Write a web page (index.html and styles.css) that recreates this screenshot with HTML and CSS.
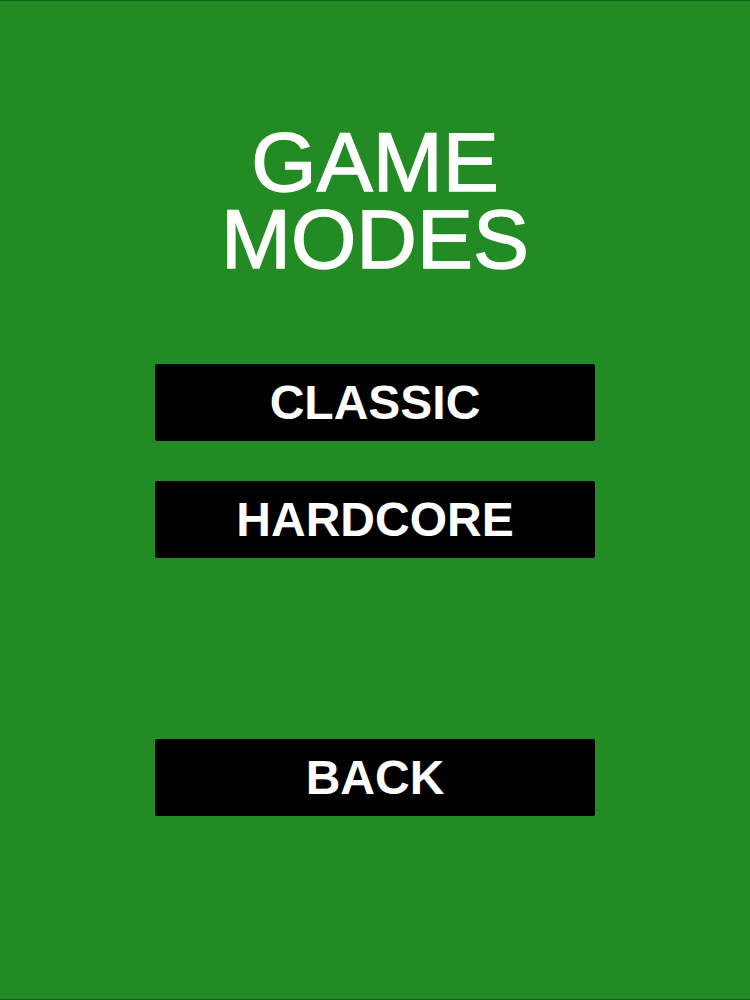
FILE: index.html
```html
<!DOCTYPE html>
<html>
<head>
<meta charset="utf-8">
<title>Game Modes</title>
<link rel="stylesheet" href="styles.css">
</head>
<body>
<main class="screen">
  <h1 class="title">GAME<br>MODES</h1>
  <div class="modes">
    <button class="btn">CLASSIC</button>
    <button class="btn">HARDCORE</button>
  </div>
  <button class="btn back">BACK</button>
</main>
</body>
</html>
```
FILE: styles.css
```css
html, body {
  margin: 0;
  padding: 0;
}
body {
  background: #238b24;
  font-family: "Liberation Sans", Arial, sans-serif;
}
.screen {
  box-sizing: border-box;
  height: 1000px;
  border-top: 1px solid #16601a;
  border-bottom: 1px solid #16601a;
  display: flex;
  flex-direction: column;
  align-items: center;
}
.title {
  margin: 123px 0 0;
  font-size: 84px;
  font-weight: normal;
  line-height: 77px;
  color: #fff;
  -webkit-text-stroke: 1.4px #fff;
  text-align: center;
}
.modes {
  margin-top: 86px;
  display: flex;
  flex-direction: column;
  gap: 40px;
}
.btn {
  width: 440px;
  height: 77px;
  border: none;
  border-radius: 2px;
  background: #000;
  color: #fff;
  font-family: "Liberation Sans", Arial, sans-serif;
  font-weight: bold;
  font-size: 48px;
  padding: 0;
  display: flex;
  align-items: center;
  justify-content: center;
}
.back {
  margin-top: 181px;
}
```
